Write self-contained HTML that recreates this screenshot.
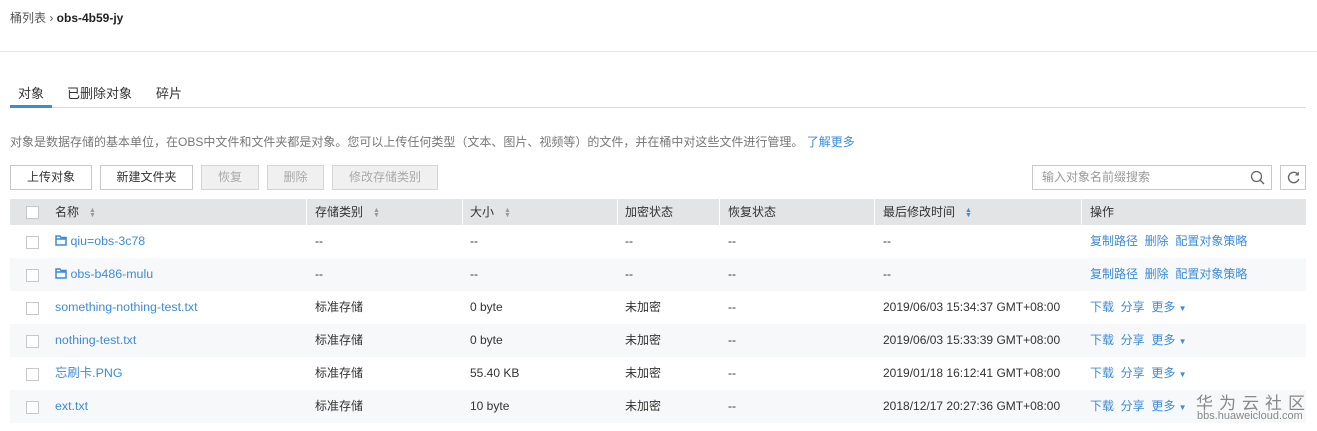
<!DOCTYPE html>
<html><head><meta charset="utf-8"><style>
*{margin:0;padding:0;box-sizing:border-box}
body{width:1317px;height:431px;background:#fff;font-family:"Liberation Sans","Noto Sans CJK SC",sans-serif;font-size:12px;color:#333;position:relative;overflow:hidden}
.a{position:absolute;white-space:nowrap}
.btn{position:absolute;top:165px;height:25px;border:1px solid #c8c8c8;background:#fff;text-align:center;line-height:23px;font-size:12px;color:#333}
.dis{background:#f0f0f0;color:#aaa;border-color:#d5d5d5}
.row{position:absolute;left:10px;width:1296px;height:33px}
.cb{position:absolute;left:16px;width:13px;height:13px;border:1px solid #c8c8c8;background:#fff}
.c{position:absolute;top:0;line-height:33px;white-space:nowrap}
.lk{color:#3d8bd9}
.nm{font-size:12.4px}
.sep{position:absolute;top:0;width:1px;height:26px;background:#fff}
.sort{display:inline-block;margin-left:10px;vertical-align:middle;font-size:7px;line-height:5px;color:#999}
</style></head><body>
<div class="a" style="left:10px;top:9px;font-size:12px;color:#555">桶列表 › <b style="color:#222">obs-4b59-jy</b></div>
<div class="a" style="left:0;top:51px;width:1317px;height:1px;background:#e5e5e5"></div>
<div class="a" style="left:18px;top:83px;font-size:13px;color:#333">对象</div>
<div class="a" style="left:67px;top:83px;font-size:13px;color:#333">已删除对象</div>
<div class="a" style="left:156px;top:83px;font-size:13px;color:#333">碎片</div>
<div class="a" style="left:10px;top:107px;width:1296px;height:1px;background:#d9d9d9"></div>
<div class="a" style="left:10px;top:105px;width:42px;height:3px;background:#3d8bd9"></div>
<div class="a" style="left:10px;top:133px;color:#777">对象是数据存储的基本单位，在OBS中文件和文件夹都是对象。您可以上传任何类型（文本、图片、视频等）的文件，并在桶中对这些文件进行管理。 <span class="lk">了解更多</span></div>
<div class="btn" style="left:10px;width:82px">上传对象</div>
<div class="btn" style="left:100px;width:93px">新建文件夹</div>
<div class="btn dis" style="left:201px;width:58px">恢复</div>
<div class="btn dis" style="left:267px;width:57px">删除</div>
<div class="btn dis" style="left:332px;width:106px">修改存储类别</div>
<div class="a" style="left:1032px;top:165px;width:240px;height:25px;border:1px solid #c8c8c8;color:#999;line-height:23px;padding-left:9px">输入对象名前缀搜索
<svg style="position:absolute;right:6px;top:4px" width="15" height="15" viewBox="0 0 15 15"><circle cx="6.5" cy="6.5" r="5" fill="none" stroke="#666" stroke-width="1.3"/><path d="M10 10l4 4" stroke="#666" stroke-width="1.4"/></svg></div>
<div class="a" style="left:1280px;top:165px;width:26px;height:25px;border:1px solid #c8c8c8">
<svg style="position:absolute;left:5px;top:4px" width="15" height="15" viewBox="0 0 15 15"><path d="M12 4.5A5.2 5.2 0 1 0 12.7 9" fill="none" stroke="#666" stroke-width="1.4"/><path d="M12.8 1.5v4h-4z" fill="#666"/></svg></div>

<div class="row" style="top:199px;height:26px;background:#e3e4e6">
<div class="cb" style="top:7px"></div>
<div class="c" style="left:45px;line-height:26px">名称<span class="sort">▲<br>▼</span></div>
<div class="sep" style="left:296px"></div>
<div class="c" style="left:305px;line-height:26px">存储类别<span class="sort">▲<br>▼</span></div>
<div class="sep" style="left:452px"></div>
<div class="c" style="left:460px;line-height:26px">大小<span class="sort">▲<br>▼</span></div>
<div class="sep" style="left:607px"></div>
<div class="c" style="left:615px;line-height:26px">加密状态</div>
<div class="sep" style="left:709px"></div>
<div class="c" style="left:718px;line-height:26px">恢复状态</div>
<div class="sep" style="left:864px"></div>
<div class="c" style="left:873px;line-height:26px">最后修改时间<span class="sort" style="color:#3d8bd9">▲<br>▼</span></div>
<div class="sep" style="left:1071px"></div>
<div class="c" style="left:1080px;line-height:26px">操作</div>
</div>

<div class="row" style="top:225px"><div class="cb" style="top:11px"></div>
<div class="c lk nm" style="left:45px"><svg width="12" height="11" viewBox="0 0 12 11" style="vertical-align:-1px"><path d="M1 1h4l1 1.5h5v7.5h-10z M1 4h10" fill="none" stroke="#3d8bd9" stroke-width="1.5"/></svg> qiu=obs-3c78</div>
<div class="c" style="left:305px">--</div><div class="c" style="left:460px">--</div><div class="c" style="left:615px">--</div><div class="c" style="left:718px">--</div><div class="c" style="left:873px">--</div>
<div class="c lk" style="left:1080px">复制路径&nbsp;&nbsp;删除&nbsp;&nbsp;配置对象策略</div></div>

<div class="row" style="top:258px;background:#f7f8f9"><div class="cb" style="top:11px"></div>
<div class="c lk nm" style="left:45px"><svg width="12" height="11" viewBox="0 0 12 11" style="vertical-align:-1px"><path d="M1 1h4l1 1.5h5v7.5h-10z M1 4h10" fill="none" stroke="#3d8bd9" stroke-width="1.5"/></svg> obs-b486-mulu</div>
<div class="c" style="left:305px">--</div><div class="c" style="left:460px">--</div><div class="c" style="left:615px">--</div><div class="c" style="left:718px">--</div><div class="c" style="left:873px">--</div>
<div class="c lk" style="left:1080px">复制路径&nbsp;&nbsp;删除&nbsp;&nbsp;配置对象策略</div></div>

<div class="row" style="top:291px"><div class="cb" style="top:11px"></div>
<div class="c lk nm" style="left:45px">something-nothing-test.txt</div>
<div class="c" style="left:305px">标准存储</div><div class="c" style="left:460px">0 byte</div><div class="c" style="left:615px">未加密</div><div class="c" style="left:718px">--</div><div class="c" style="left:873px">2019/06/03 15:34:37 GMT+08:00</div>
<div class="c lk" style="left:1080px">下载&nbsp;&nbsp;分享&nbsp;&nbsp;更多 <span style="font-size:8px">▼</span></div></div>

<div class="row" style="top:324px;background:#f7f8f9"><div class="cb" style="top:11px"></div>
<div class="c lk nm" style="left:45px">nothing-test.txt</div>
<div class="c" style="left:305px">标准存储</div><div class="c" style="left:460px">0 byte</div><div class="c" style="left:615px">未加密</div><div class="c" style="left:718px">--</div><div class="c" style="left:873px">2019/06/03 15:33:39 GMT+08:00</div>
<div class="c lk" style="left:1080px">下载&nbsp;&nbsp;分享&nbsp;&nbsp;更多 <span style="font-size:8px">▼</span></div></div>

<div class="row" style="top:357px"><div class="cb" style="top:11px"></div>
<div class="c lk nm" style="left:45px">忘刷卡.PNG</div>
<div class="c" style="left:305px">标准存储</div><div class="c" style="left:460px">55.40 KB</div><div class="c" style="left:615px">未加密</div><div class="c" style="left:718px">--</div><div class="c" style="left:873px">2019/01/18 16:12:41 GMT+08:00</div>
<div class="c lk" style="left:1080px">下载&nbsp;&nbsp;分享&nbsp;&nbsp;更多 <span style="font-size:8px">▼</span></div></div>

<div class="row" style="top:390px;background:#f7f8f9"><div class="cb" style="top:11px"></div>
<div class="c lk nm" style="left:45px">ext.txt</div>
<div class="c" style="left:305px">标准存储</div><div class="c" style="left:460px">10 byte</div><div class="c" style="left:615px">未加密</div><div class="c" style="left:718px">--</div><div class="c" style="left:873px">2018/12/17 20:27:36 GMT+08:00</div>
<div class="c lk" style="left:1080px">下载&nbsp;&nbsp;分享&nbsp;&nbsp;更多 <span style="font-size:8px">▼</span></div></div>

<div class="a" style="left:1196px;top:389px;font-size:17px;color:#888;letter-spacing:6px">华为云社区</div>
<div class="a" style="left:1197px;top:410px;font-size:11px;color:#888">bbs.huaweicloud.com</div>
</body></html>
